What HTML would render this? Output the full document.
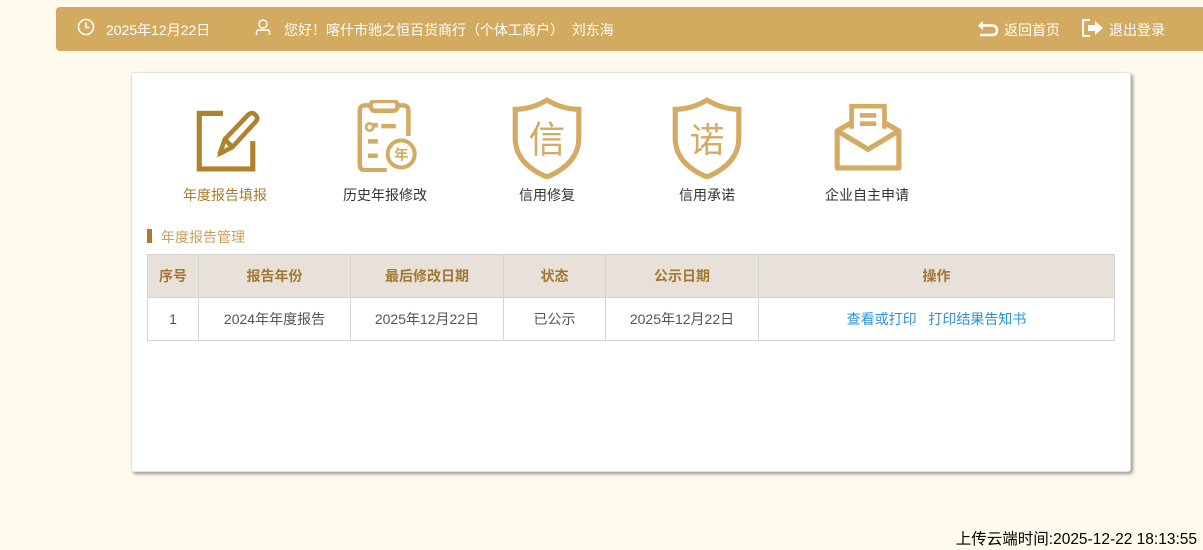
<!DOCTYPE html>
<html><head><meta charset="utf-8"><style>
*{margin:0;padding:0;box-sizing:border-box}
body{width:1203px;height:550px;background:#fffaeb;font-family:"Liberation Sans","Noto Sans CJK SC",sans-serif;position:relative;overflow:hidden;font-size:14px}
.hdr{position:absolute;left:56px;top:7px;width:1147px;height:44px;background:#d2aa60;border-radius:4px 0 0 4px;color:#fff;font-size:14px}
.hdr span{position:absolute;top:13px;white-space:nowrap}
.card{position:absolute;left:131px;top:72px;width:1000px;height:400px;background:#fff;border-radius:3px;box-shadow:2px 2px 3px #999;border:1px solid #e6e0d6}
.ic{position:absolute;top:27px;width:120px;text-align:center;font-size:14px;color:#333}
.ic svg{display:block;margin:0 auto 13px}
.ttl{position:absolute;left:15px;top:154px;color:#c8a05a;font-size:14px;padding-left:14px}
.bar{position:absolute;left:15px;top:156px;width:5px;height:14px;background:#a77b2a}
table{position:absolute;left:15px;top:181px;width:968px;border-collapse:collapse;font-size:14px}
th{background:#e8e1da;color:#a2772e;height:43px;border:1px solid #d4d4d4;font-weight:bold}
td{height:43px;border:1px solid #d4d4d4;text-align:center;color:#555}
a{color:#2a93d8;text-decoration:none}
.up{position:absolute;right:6px;top:527px;font-size:15.5px;color:#000}
</style></head><body>
<div class="hdr">
<svg style="position:absolute;left:21px;top:11px" width="18" height="18" viewBox="0 0 18 18"><circle cx="9" cy="9" r="7.5" fill="none" stroke="#fff" stroke-width="1.5"/><path d="M9 4.5V9.5H12.5" fill="none" stroke="#fff" stroke-width="1.5"/></svg>
<span style="left:50px">2025年12月22日</span>
<svg style="position:absolute;left:199px;top:11px" width="16" height="18" viewBox="0 0 16 18"><circle cx="8" cy="6" r="4" fill="none" stroke="#fff" stroke-width="1.4"/><path d="M1.5 17V14.5Q1.5 12 4 12H12Q14.5 12 14.5 14.5V17" fill="none" stroke="#fff" stroke-width="1.4"/></svg>
<span style="left:228px">您好！喀什市驰之恒百货商行（个体工商户）&nbsp;&nbsp;刘东海</span>
<svg style="position:absolute;left:921px;top:12px" width="22" height="18" viewBox="0 0 22 18"><path d="M6 2L1 6.5L6 11Z" fill="#fff"/><path d="M5 6.5H15Q20 6.5 20 11.5Q20 16 15 16H3" fill="none" stroke="#fff" stroke-width="2.5"/></svg>
<span style="left:948px">返回首页</span>
<svg style="position:absolute;left:1025px;top:11px" width="24" height="20" viewBox="0 0 24 20"><path d="M9 2H3Q2 2 2 3V17Q2 18 3 18H9" fill="none" stroke="#fff" stroke-width="2"/><path d="M7 7H14V3L22 10L14 17V13H7Z" fill="#fff"/></svg>
<span style="left:1053px">退出登录</span>
</div>
<div class="card">
<div class="ic" style="left:33px;color:#a77b2a"><svg width="72" height="72" viewBox="0 0 70 70"><path d="M33 13H10V67H62V40" fill="none" stroke="#ae822f" stroke-width="5"/><path d="M30 52L35 38L58 14Q62 11 65 15Q68 18 64 22L42 46Z M35 38L42 46" fill="none" stroke="#ae822f" stroke-width="4.5" stroke-linejoin="round"/><path d="M27 56L31 48L35 52Z" fill="#ae822f"/></svg>年度报告填报</div>
<div class="ic" style="left:193px"><svg width="76" height="72" viewBox="0 0 76 80"><path d="M22 6H16Q10 6 10 12V72Q10 78 16 78H40" fill="none" stroke="#d4ab62" stroke-width="5"/><path d="M52 6H58Q64 6 64 12V40" fill="none" stroke="#d4ab62" stroke-width="5"/><rect x="22" y="1" width="30" height="11" rx="5" fill="none" stroke="#d4ab62" stroke-width="5"/><circle cx="21" cy="30" r="4" fill="none" stroke="#d4ab62" stroke-width="3"/><path d="M25 28H30M34 29H50M19 46H30M19 62H30" stroke="#d4ab62" stroke-width="5"/><circle cx="56" cy="60" r="15" fill="none" stroke="#d4ab62" stroke-width="4.5"/><text x="56" y="66" text-anchor="middle" font-size="16" font-weight="bold" fill="#d4ab62" font-family="Noto Sans CJK SC">年</text></svg>历史年报修改</div>
<div class="ic" style="left:355px"><svg width="72" height="82" viewBox="0 0 70 80" style="margin-top:-3px;margin-bottom:6px"><path d="M35 3Q50 12 66 12V40Q66 65 35 78Q4 65 4 40V12Q20 12 35 3Z" fill="none" stroke="#d4ab62" stroke-width="5"/><text x="35" y="54" text-anchor="middle" font-size="36" fill="#d4ab62" font-family="Noto Sans CJK SC">信</text></svg>信用修复</div>
<div class="ic" style="left:515px"><svg width="72" height="82" viewBox="0 0 70 80" style="margin-top:-3px;margin-bottom:6px"><path d="M35 3Q50 12 66 12V40Q66 65 35 78Q4 65 4 40V12Q20 12 35 3Z" fill="none" stroke="#d4ab62" stroke-width="5"/><text x="35" y="54" text-anchor="middle" font-size="34" fill="#d4ab62" font-family="Noto Sans CJK SC">诺</text></svg>信用承诺</div>
<div class="ic" style="left:675px"><svg width="72" height="72" viewBox="0 0 70 70"><path d="M20 28V6H52V28" fill="none" stroke="#d4ab62" stroke-width="4.5"/><path d="M28 15H44M28 23H44" stroke="#d4ab62" stroke-width="4.5"/><path d="M6 30L20 22M52 22L66 30V66H6V30L36 48L66 30" fill="none" stroke="#d4ab62" stroke-width="5" stroke-linejoin="round"/></svg>企业自主申请</div>
<div class="bar"></div><div class="ttl">年度报告管理</div>
<table>
<tr><th style="width:51px">序号</th><th style="width:152px">报告年份</th><th style="width:153px">最后修改日期</th><th style="width:102px">状态</th><th style="width:153px">公示日期</th><th>操作</th></tr>
<tr><td>1</td><td>2024年年度报告</td><td>2025年12月22日</td><td>已公示</td><td>2025年12月22日</td><td><a>查看或打印</a>&nbsp;&nbsp;&nbsp;<a>打印结果告知书</a></td></tr>
</table>
</div>
<div class="up">上传云端时间:2025-12-22 18:13:55</div>
</body></html>
